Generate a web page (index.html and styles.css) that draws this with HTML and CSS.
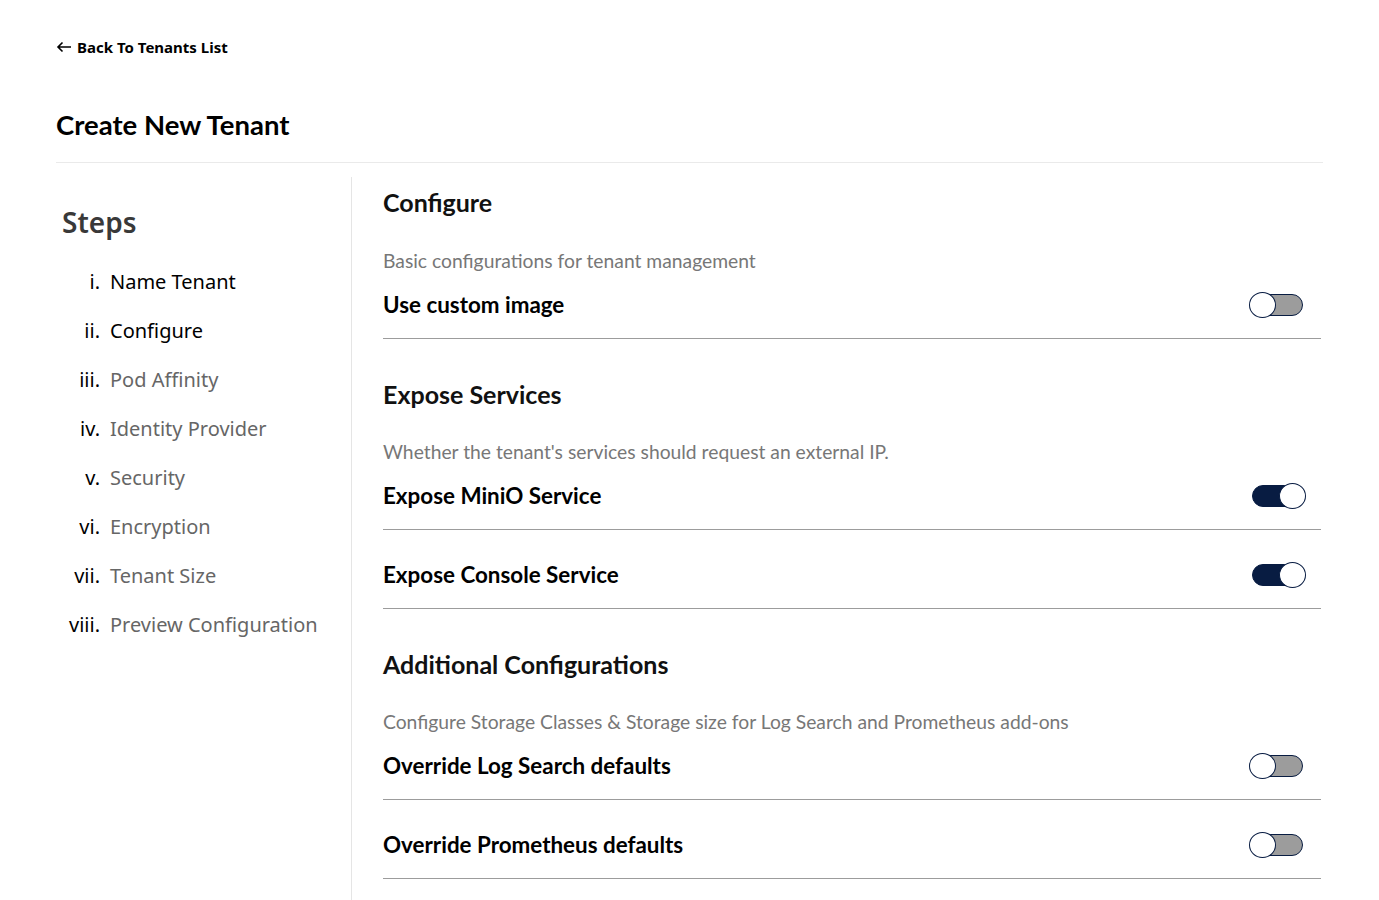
FILE: index.html
```html
<!DOCTYPE html>
<html lang="en">
<head>
<meta charset="utf-8">
<title>Create New Tenant</title>
<link rel="stylesheet" href="styles.css">
</head>
<body>
<div class="page">
  <a class="back-link" href="#">
    <svg class="back-icon" width="16" height="12" viewBox="0 0 16 12" aria-hidden="true"><path d="M15 6H2M6.5 1.5L2 6l4.5 4.5" fill="none" stroke="#000" stroke-width="1.6"/></svg>
    <span>Back To Tenants List</span>
  </a>
  <h1 class="page-title">Create New Tenant</h1>
  <div class="wizard">
    <aside class="steps">
      <h2 class="steps-title">Steps</h2>
      <ol class="steps-list">
        <li class="step done"><span class="num">i.</span><span class="label">Name Tenant</span></li>
        <li class="step done"><span class="num">ii.</span><span class="label">Configure</span></li>
        <li class="step"><span class="num">iii.</span><span class="label">Pod Affinity</span></li>
        <li class="step"><span class="num">iv.</span><span class="label">Identity Provider</span></li>
        <li class="step"><span class="num">v.</span><span class="label">Security</span></li>
        <li class="step"><span class="num">vi.</span><span class="label">Encryption</span></li>
        <li class="step"><span class="num">vii.</span><span class="label">Tenant Size</span></li>
        <li class="step"><span class="num">viii.</span><span class="label">Preview Configuration</span></li>
      </ol>
    </aside>
    <main class="content">
      <section class="section">
        <h3 class="section-title">Configure</h3>
        <p class="section-desc">Basic configurations for tenant management</p>
        <div class="row"><span class="row-label">Use custom image</span><span class="toggle"><span class="track"></span><span class="knob"></span></span></div>
      </section>
      <section class="section">
        <h3 class="section-title">Expose Services</h3>
        <p class="section-desc">Whether the tenant's services should request an external IP.</p>
        <div class="row"><span class="row-label">Expose MiniO Service</span><span class="toggle on"><span class="track"></span><span class="knob"></span></span></div>
        <div class="row"><span class="row-label">Expose Console Service</span><span class="toggle on"><span class="track"></span><span class="knob"></span></span></div>
      </section>
      <section class="section">
        <h3 class="section-title">Additional Configurations</h3>
        <p class="section-desc">Configure Storage Classes &amp; Storage size for Log Search and Prometheus add-ons</p>
        <div class="row"><span class="row-label">Override Log Search defaults</span><span class="toggle"><span class="track"></span><span class="knob"></span></span></div>
        <div class="row"><span class="row-label">Override Prometheus defaults</span><span class="toggle"><span class="track"></span><span class="knob"></span></span></div>
      </section>
    </main>
  </div>
</div>
</body>
</html>
```
FILE: styles.css
```css
* { box-sizing: border-box; }
html, body { margin: 0; padding: 0; background: #fff; }
body { font-family: "Lato", "Liberation Sans", sans-serif; color: #000; }

.page { padding: 36px 56px 0 56px; }

.back-link {
  display: flex;
  align-items: center;
  gap: 5px;
  height: 22px;
  font-family: "Noto Sans", "Open Sans", sans-serif;
  font-weight: 700;
  font-size: 15px;
  color: #000;
  text-decoration: none;
}
.back-icon { display: block; }

.page-title {
  margin: 50px 0 0 0;
  font-size: 27.5px;
  line-height: 34px;
  font-weight: 700;
  padding-bottom: 20px;
  border-bottom: 1px solid #eaeaea;
}

.wizard {
  display: flex;
  margin-top: 14px;
}

.steps {
  width: 296px;
  flex: none;
  border-right: 1px solid #e5e5e5;
  min-height: 740px;
  font-family: "Noto Sans", "Open Sans", sans-serif;
  padding-left: 6px;
}
.steps-title {
  margin: 27px 0 0 0;
  font-size: 28px;
  line-height: 36px;
  font-weight: 600;
  color: #393939;
}
.steps-list {
  list-style: none;
  margin: 17px 0 0 0;
  padding: 0;
}
.step {
  display: flex;
  align-items: center;
  height: 49px;
  font-size: 20px;
  color: #666;
}
.step .num {
  width: 38px;
  text-align: right;
  color: #000;
  margin-right: 10px;
}
.step.done .label { color: #000; }

.content {
  flex: 1;
  padding-left: 31px;
  padding-right: 2px;
}

.section { padding-top: 40px; }
.section:first-child { padding-top: 10px; }

.section-title {
  margin: 0;
  font-size: 25px;
  line-height: 30px;
  font-weight: 700;
  color: #111;
}
.section-desc {
  margin: 32px 0 0 0;
  font-size: 19.3px;
  line-height: 22px;
  color: #777;
}
.section:first-child .section-desc { margin-top: 33px; }

.row {
  display: flex;
  align-items: center;
  justify-content: space-between;
  padding: 20px 15px 20px 0;
  border-bottom: 1px solid #9c9c9c;
}
.row + .row { padding-top: 32px; }
.row-label {
  font-size: 22.4px;
  line-height: 26px;
  font-weight: 700;
  color: #000;
}

.toggle {
  position: relative;
  width: 57px;
  height: 26px;
  flex: none;
}
.toggle .track {
  position: absolute;
  left: 3px;
  right: 3px;
  top: 2px;
  bottom: 2px;
  border-radius: 11px;
  background: #9c9c9c;
  border: 1px solid #081c42;
}
.toggle .knob {
  position: absolute;
  left: 0;
  top: 0;
  width: 27px;
  height: 26px;
  border-radius: 50%;
  background: #fff;
  border: 1px solid #081c42;
}
.toggle.on .track { background: #081c42; left: 3px; right: 1px; }
.toggle.on .knob { left: auto; right: 0; }
```
